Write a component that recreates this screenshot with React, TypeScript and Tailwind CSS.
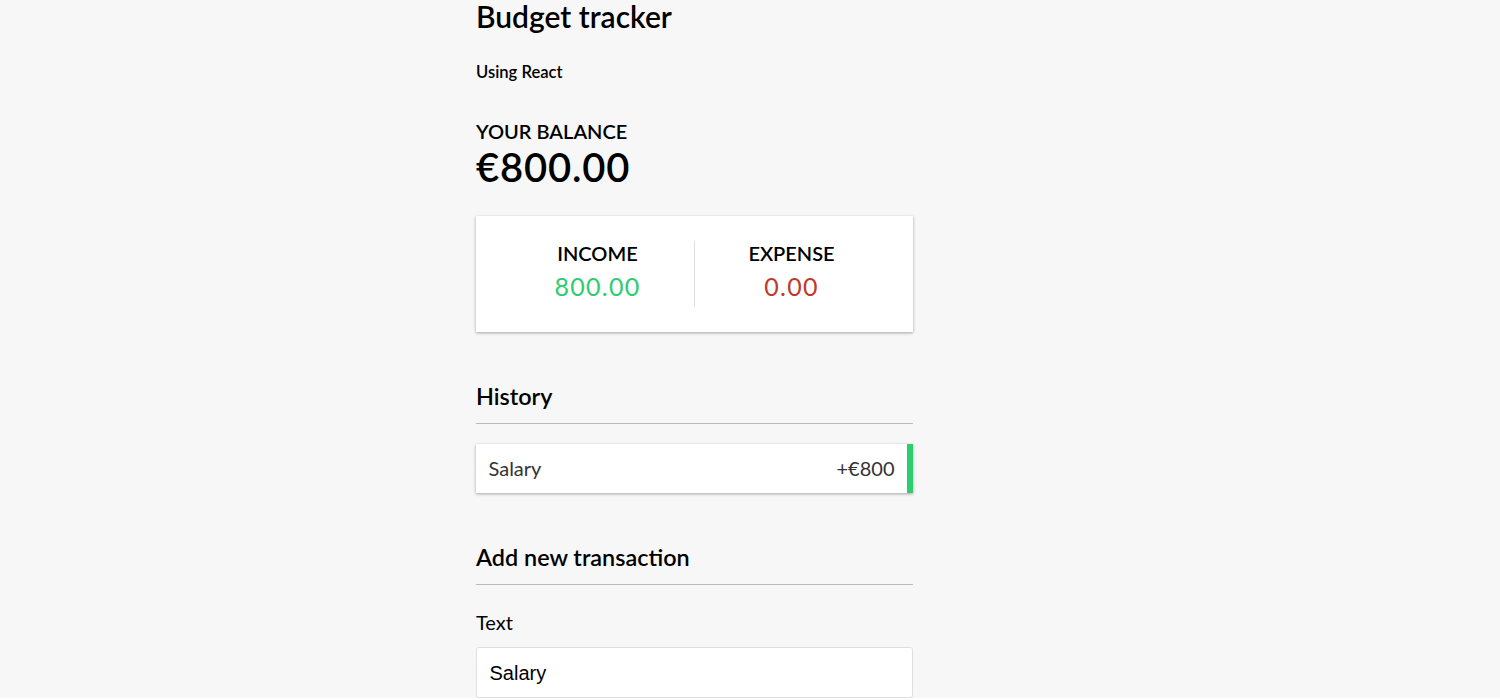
const shadow = 'shadow-[0_1.25px_3.75px_rgba(0,0,0,0.12),0_1.25px_2.5px_rgba(0,0,0,0.24)]'

function IncomeExpense() {
  return (
    <div className={`my-[25px] flex bg-white p-[25px] ${shadow}`}>
      <div className="flex-1 border-r border-[#dedede] text-center">
        <h4 className="text-[20px] font-semibold uppercase leading-[1.2]">Income</h4>
        <p className="my-[6.25px] text-[25px] leading-[1.2] tracking-[1.25px] text-[#2ecc71]">800.00</p>
      </div>
      <div className="flex-1 text-center">
        <h4 className="text-[20px] font-semibold uppercase leading-[1.2]">Expense</h4>
        <p className="my-[6.25px] text-[25px] leading-[1.2] tracking-[1.25px] text-[#c0392b]">0.00</p>
      </div>
    </div>
  )
}

function SectionTitle({ children }: { children: string }) {
  return (
    <h3 className="mt-[50px] mb-[12.5px] border-b border-[#bbb] pb-[12.5px] text-[23.4px] font-semibold leading-[1.2]">
      {children}
    </h3>
  )
}

export default function App() {
  return (
    <div className="min-h-screen bg-[#f7f7f7] font-['Lato',sans-serif] text-black">
      <div className="ml-[476px] w-[437px]">
        <h2 className="-mt-[2px] text-[30px] font-semibold leading-[1.2]">Budget tracker</h2>
        <h5 className="mt-[29px] text-[16.6px] font-semibold leading-[1.2]">Using React</h5>
        <h4 className="mt-[36px] text-[20px] font-semibold uppercase leading-[1.2]">Your Balance</h4>
        <h1 className="text-[40px] font-semibold leading-[1.2] tracking-[0.8px]">€800.00</h1>

        <IncomeExpense />

        <SectionTitle>History</SectionTitle>
        <ul className="mt-[20px] mb-[50px]">
          <li
            className={`my-[12.5px] flex justify-between border-r-[6.25px] border-[#2ecc71] bg-white p-[12.5px] text-[20px] leading-[1.2] text-[#333] ${shadow}`}
          >
            Salary <span>+€800</span>
          </li>
        </ul>

        <SectionTitle>Add new transaction</SectionTitle>
        <form>
          <div>
            <label className="mt-[12.5px] mb-[13.5px] inline-block text-[20px] leading-[1.2]">Text</label>
            <input
              type="text"
              defaultValue="Salary"
              className="block w-full rounded-[2.5px] border border-[#dedede] bg-white p-[12.5px] font-['Liberation_Sans',Arial,sans-serif] text-[20px] leading-[1.2] text-black"
            />
          </div>
        </form>
      </div>
    </div>
  )
}
